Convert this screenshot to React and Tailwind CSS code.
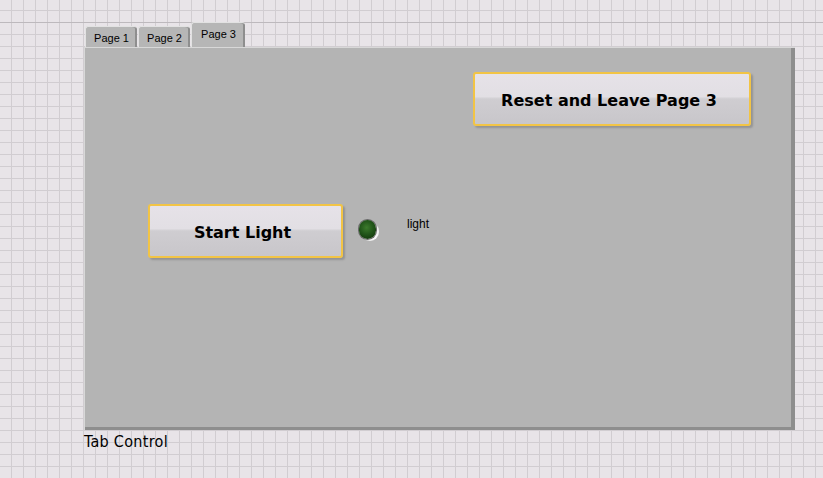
import React from 'react'

const font = { tahoma: "font-['DejaVu_Sans','Liberation_Sans',sans-serif]" }

const Tab = ({ label, active }) => (
    <div
        className={`relative flex items-start justify-center rounded-t-[3px] border-t border-l border-[#e2e2e2] bg-[#b6b6b6] shadow-[inset_-2px_0_0_#8e8e8e] ${
            active ? 'h-[25px] w-[54px] pt-[5px]' : 'h-[21px] w-[52px] pt-[5px]'
        }`}
    >
        <span className="text-[11px] leading-[12px] text-black font-['Liberation_Sans',sans-serif]">{label}</span>
    </div>
)

const BigButton = ({ label, className }) => (
    <div
        className={`flex items-center justify-center rounded-[3px] border-2 border-[#f2c445] bg-[linear-gradient(to_bottom,#e6e2e8_0%,#e2dfe4_45%,#cfcdd1_50%,#c8c6ca_100%)] pt-[4px] pr-[6px] shadow-[2px_2px_2px_rgba(0,0,0,0.18)] ${className}`}
    >
        <span className={`text-[16px] font-bold text-black ${font.tahoma}`}>{label}</span>
    </div>
)

const Led = () => (
    <div className="relative h-[22px] w-[20px]">
        <div className="absolute left-[2px] top-[3px] h-[19px] w-[18px] rounded-full bg-[radial-gradient(circle_at_70%_70%,#ffffff_0%,#e4e4e4_60%,#c4c4c4_100%)]" />
        <div className="absolute left-0 top-[1px] h-[19px] w-[17px] rounded-full bg-[radial-gradient(circle_at_45%_40%,#3c7a2c_0%,#22561a_45%,#0c2c06_100%)] shadow-[0_0_0_1px_#6a6a6a]" />
    </div>
)

export default function App() {
    return (
        <div className="h-[478px] w-[823px] overflow-hidden bg-[#e8e4e8] bg-[linear-gradient(to_bottom,transparent_22px,#bdb9bd_22px,#bdb9bd_23px,transparent_23px),linear-gradient(to_right,#d1cdd1_1px,transparent_1px),linear-gradient(to_bottom,#d1cdd1_1px,transparent_1px)] bg-size-[100%_100%,12px_12px,12px_12px] bg-position-[0_0,11px_10px,11px_10px]">
            <div className="pl-[84px] pt-[22px]">
                {/* tabs */}
                <div className="flex items-end gap-[1px] pl-[1px]">
                    <Tab label="Page 1" />
                    <Tab label="Page 2" />
                    <Tab label="Page 3" active />
                </div>

                {/* tab panel */}
                <div className="flex h-[383px] w-[711px] flex-col border-t border-l border-[#d8d8d8] bg-[#b4b4b4] shadow-[inset_-4px_-3px_0_#8e8e8e,inset_-2px_-1px_0_#707070]">
                    <div className="flex pt-[24px] pl-[388px]">
                        <BigButton label="Reset and Leave Page 3" className="h-[54px] w-[278px]" />
                    </div>
                    <div className="mt-[78px] flex items-center pl-[63px]">
                        <BigButton label="Start Light" className="h-[54px] w-[195px]" />
                        <div className="ml-[16px] mt-[-2px]">
                            <Led />
                        </div>
                        <span className="ml-[28px] mt-[-14px] text-[12px] text-black font-['Liberation_Sans',sans-serif]">light</span>
                    </div>
                </div>

                <div className="mt-[3px] text-[16px] leading-[18px] tracking-[0.3px] text-black font-['DejaVu_Sans_Condensed','Liberation_Sans_Narrow',sans-serif]">
                    Tab Control
                </div>
            </div>
        </div>
    )
}
